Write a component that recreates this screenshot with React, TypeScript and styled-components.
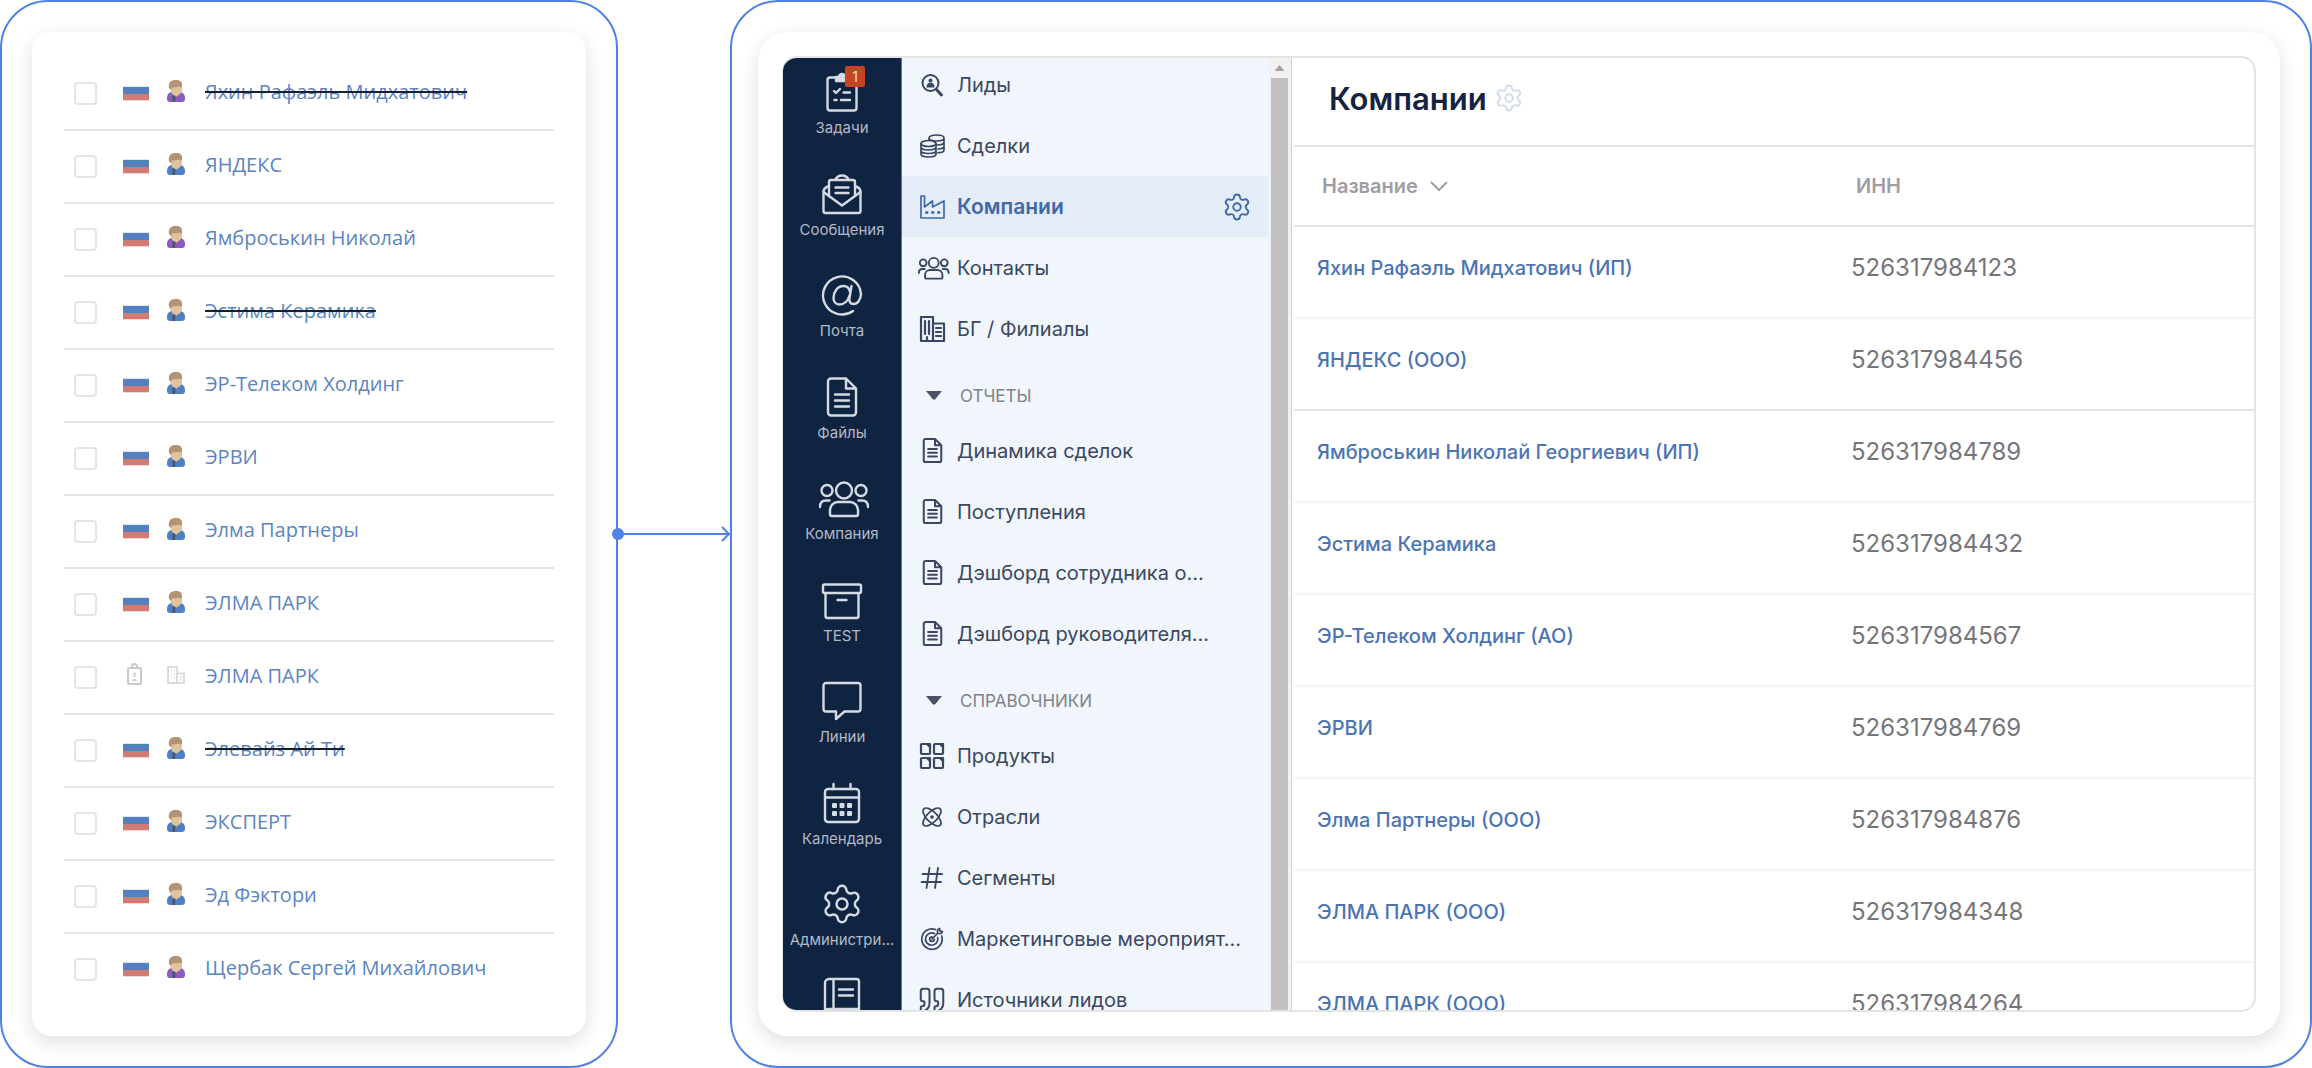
import React from "react";
import styled, { createGlobalStyle, css } from "styled-components";
import { Atom, Quote, Settings } from "lucide-react";

const color = {
  outline: "#4f82e4",
  line: "#e4e4e4",
  lineSoft: "#f3f3f3",
  navy: "#0f2441",
  menu: "#f0f6fb",
  menuActive: "#e4edf7",
  ink: "#3a4762",
  link: "#4c74b3",
};

const GlobalStyle = createGlobalStyle`
  *, *::before, *::after { box-sizing: border-box; }
  body { margin: 0; background: #fff; font-family: Inter, "Noto Sans", sans-serif; }
  ul { list-style: none; margin: 0; padding: 0; }
  a { text-decoration: none; color: inherit; }
  button { font: inherit; color: inherit; background: none; border: 0; padding: 0; cursor: pointer; }
  svg { display: block; flex: none; overflow: visible; }
`;

/* ---------- page ---------- */

const Page = styled.div`
  display: grid;
  grid-template-columns: minmax(0, 618fr) minmax(0, 112fr) minmax(0, 1582fr);
  height: 100vh;
`;

const Panel = styled.section<{ $pad: string }>`
  display: flex;
  flex-direction: column;
  min-height: 0;
  border: 2px solid ${color.outline};
  border-radius: 48px;
  padding: ${(p) => p.$pad};
`;

const Card = styled.div<{ $pad: string; $radius: number }>`
  display: flex;
  flex-direction: column;
  flex: 1;
  min-height: 0;
  padding: ${(p) => p.$pad};
  background: #fff;
  border-radius: ${(p) => p.$radius}px;
  box-shadow: 0 6px 20px rgba(0, 0, 0, 0.13);
`;

const Connector = styled.div`
  position: relative;
  align-self: center;
  height: 2px;
  background: ${color.outline};
  &::before {
    content: "";
    position: absolute;
    left: -6px;
    top: -5px;
    width: 12px;
    height: 12px;
    border-radius: 50%;
    background: ${color.outline};
  }
`;

const ArrowHead = styled.svg`
  position: absolute;
  right: 0;
  top: -7px;
`;

/* ---------- source list ---------- */

const SourceRow = styled.li`
  display: flex;
  align-items: center;
  height: 73px;
  padding-left: 10px;
  border-bottom: 2px solid ${color.line};
  &:last-child { border-bottom-color: transparent; }
`;

const Check = styled.input`
  appearance: none;
  width: 23px;
  height: 23px;
  margin: 0 26px 0 0;
  border: 2px solid #e4e4e4;
  border-radius: 4px;
  background: #fff;
`;

const Marker = styled.span`
  display: flex;
  justify-content: center;
  width: 26px;
  margin-right: 18px;
`;

const Avatar = styled.span`
  display: flex;
  width: 18px;
  margin-right: 20px;
  padding-bottom: 6px;
`;

const Flag = styled.span`
  width: 26px;
  height: 15px;
  background: linear-gradient(#dfe8f2 0 1px, #5580c0 1px 8px, #d27b74 8px 14px, #ecdcd4 14px);
`;

const SourceLink = styled.a<{ $struck?: boolean }>`
  padding-bottom: 4px;
  font-family: "Open Sans", "Noto Sans", sans-serif;
  font-size: 20px;
  line-height: 28px;
  color: #5c84c2;
  ${(p) => p.$struck && css`text-decoration: line-through 2px #16202e;`}
`;

/* ---------- application window ---------- */

const Frame = styled.div`
  display: flex;
  flex: 1;
  min-height: 0;
  overflow: hidden;
  border: 2px solid ${color.line};
  border-left-width: 1px;
  border-radius: 15px;
`;

const Rail = styled.nav`
  display: grid;
  flex: none;
  grid-auto-rows: 1fr;
  width: 119px;
  height: 1015px;
  background: ${color.navy};
  border-right: 1px solid #65758c;
`;

const RailItem = styled.a`
  display: flex;
  flex-direction: column;
  align-items: center;
  gap: 6px;
  padding-top: 14px;
  color: #d6dae2;
`;

const RailIcon = styled.span`
  position: relative;
  display: flex;
  align-items: center;
  justify-content: center;
  width: 40px;
  height: 40px;
`;

const RailLabel = styled.span`
  font-size: 15px;
  line-height: 20px;
  color: #b3b9c5;
`;

const Badge = styled.span`
  position: absolute;
  top: -6px;
  left: 23px;
  width: 20px;
  height: 21px;
  border-radius: 2px;
  background: #c44523;
  color: #f3dcd5;
  font-size: 14px;
  line-height: 21px;
  text-align: center;
`;

const Menu = styled.nav`
  flex: none;
  width: 367px;
  background: ${color.menu};
  color: ${color.ink};
`;

const MenuList = styled.ul`
  &:first-child { margin-top: -4px; }
`;

const MenuRow = styled.li<{ $active?: boolean }>`
  display: flex;
  align-items: center;
  height: 61px;
  margin-right: 1px;
  padding: 0 16px 0 13px;
  font-size: 20px;
  ${(p) => p.$active && css`
    background: ${color.menuActive};
    color: #3f69a8;
    font-size: 21px;
    font-weight: 600;
  `}
`;

const MenuLink = styled.a`
  display: flex;
  flex: 1;
  align-items: center;
  gap: 8px;
  white-space: nowrap;
`;

const MenuIcon = styled.span`
  display: flex;
  justify-content: center;
  width: 34px;
`;

const SectionToggle = styled.button`
  display: flex;
  align-items: center;
  gap: 7px;
  width: 100%;
  height: 61px;
  padding: 12px 13px 0;
  font-size: 17px;
  color: #7f828b;
`;

const SectionCaret = styled.span`
  display: flex;
  justify-content: center;
  width: 38px;
`;

const Scrollbar = styled.div`
  display: flex;
  flex: none;
  flex-direction: column;
  align-items: center;
  width: 22px;
  padding-right: 1px;
  background: #f1f1f1;
`;

const ScrollArrow = styled.span`
  width: 10px;
  height: 6px;
  margin: 7px 0;
  background: #a3a3a3;
  clip-path: polygon(50% 0, 100% 100%, 0 100%);
`;

const Thumb = styled.span`
  flex: 1;
  width: 17px;
  background: #c1c1c1;
`;

const Main = styled.main`
  flex: 1;
  min-width: 0;
  padding-left: 2px;
  border-left: 1px solid #d6d6d6;
`;

const TitleBar = styled.header`
  display: flex;
  align-items: center;
  gap: 7px;
  height: 89px;
  padding: 0 35px 7px;
  border-bottom: 2px solid ${color.line};
  color: #cfdcec;
`;

const Title = styled.h1`
  margin: 0;
  font-size: 31px;
  font-weight: 600;
  color: #132340;
`;

const Table = styled.table`
  width: 100%;
  table-layout: fixed;
  border-spacing: 0;
  text-align: left;
`;

const HeadCell = styled.th<{ $wide?: boolean }>`
  width: ${(p) => (p.$wide ? "534px" : "auto")};
  height: 80px;
  padding: 0 0 0 28px;
  border-bottom: 2px solid ${color.line};
  font-size: 20px;
  font-weight: 600;
  color: #9f9da4;
`;

const SortButton = styled.button`
  display: flex;
  align-items: center;
  gap: 12px;
`;

const Cell = styled.td<{ $strong?: boolean }>`
  height: 92px;
  padding: 0 0 8px 23px;
  border-bottom: 2px solid ${(p) => (p.$strong ? color.line : color.lineSoft)};
  font-size: 24px;
  line-height: 30px;
  color: #77757a;
`;

const CompanyLink = styled.a`
  display: block;
  font-size: 20px;
  font-weight: 500;
  color: ${color.link};
`;

/* ---------- drawings ---------- */

type BoxProps = { w: number; h: number; vb: string; sw?: number; children: React.ReactNode };
const Draw = ({ w, h, vb, sw = 2.4, children }: BoxProps) => (
  <svg width={w} height={h} viewBox={vb} fill="none" stroke="currentColor" strokeWidth={sw}
    strokeLinecap="round" strokeLinejoin="round" aria-hidden="true">{children}</svg>
);

const FileIcon = ({ size, sw }: { size: number; sw?: number }) => (
  <Draw w={size} h={size} vb="0 0 40 40" sw={sw}>
    <path d="M24 1.5H9a3 3 0 0 0-3 3v31a3 3 0 0 0 3 3h22a3 3 0 0 0 3-3V11.5L24 1.5v10h10" />
    <path d="M13 17.5h14M13 23.5h14M13 29.5h14" />
  </Draw>
);

const PeopleIcon = ({ w, h, sw }: { w: number; h: number; sw?: number }) => (
  <Draw w={w} h={h} vb="-2 0 50 40" sw={sw}>
    <circle cx="25" cy="12.5" r="8" />
    <circle cx="8" cy="12.5" r="5.5" />
    <circle cx="42" cy="12.5" r="5.5" />
    <path d="M11 36v-4a8 8 0 0 1 8-8h12a8 8 0 0 1 8 8v4a2 2 0 0 1-2 2H13a2 2 0 0 1-2-2z" />
    <path d="M1 29c0-4 2-6.5 6-6.5h3.5M49 29c0-4-2-6.5-6-6.5h-3.5" />
  </Draw>
);

type RailEntry = { id: string; label?: string; badge?: string; icon: React.ReactNode };
const railItems: RailEntry[] = [
  { id: "tasks", label: "Задачи", badge: "1", icon: (
    <Draw w={40} h={40} vb="0 0 40 40">
      <rect x="5.5" y="5.5" width="29" height="33" rx="2.5" />
      <path d="M14 9V5h3a3 3 0 0 1 6 0h3v4z" fill="currentColor" />
      <path d="M12 19l2 2 4-4M21.5 20.5H28M12.5 28h2M19 28h9" />
    </Draw>) },
  { id: "messages", label: "Сообщения", icon: (
    <Draw w={40} h={40} vb="0 0 40 40">
      <path d="M7 22V8a2 2 0 0 1 2-2h22a2 2 0 0 1 2 2v14M13 6c3-6 11-6 14 0" />
      <path d="M7 12c-3 1-5.5 3-5.5 6v19a2 2 0 0 0 2 2h33a2 2 0 0 0 2-2V18c0-3-2.5-5-5.5-6" />
      <path d="M1.5 18L20 31.5 38.500 18M13.5 13.5h13M13.5 19h13" />
    </Draw>) },
  { id: "mail", label: "Почта", icon: (
    <Draw w={40} h={40} vb="0 0 40 40">
      <path d="M31 36a19 19 0 1 1 8-17c-.3 6-3.5 10-7.5 10-3.500 0-4.500-2.500-4-6l2-12" />
      <path d="M28 17c-.8-4-3-6-6.5-6-6 0-10 6-10 12 0 4 2.5 6.500 6 6.500 5 0 8.500-4 9.800-8.500" />
    </Draw>) },
  { id: "files", label: "Файлы", icon: <FileIcon size={40} /> },
  { id: "company", label: "Компания", icon: <PeopleIcon w={50} h={40} /> },
  { id: "test", label: "TEST", icon: (
    <Draw w={40} h={40} vb="0 0 40 40">
      <rect x="1" y="4.5" width="38" height="8.5" rx="1.5" />
      <path d="M3.5 13v23a2 2 0 0 0 2 2h29a2 2 0 0 0 2-2V13M15.5 20h9" />
    </Draw>) },
  { id: "lines", label: "Линии", icon: (
    <Draw w={40} h={40} vb="0 0 40 40">
      <path d="M4 2h32a2.5 2.5 0 0 1 2.5 2.5V28a2.5 2.5 0 0 1-2.5 2.5H22.5L14 38v-7.500H4A2.5 2.5 0 0 1 1.5 28V4.5A2.5 2.5 0 0 1 4 2z" />
    </Draw>) },
  { id: "calendar", label: "Календарь", icon: (
    <Draw w={40} h={40} vb="0 0 40 40">
      <rect x="3" y="6" width="34" height="33" rx="3" />
      <path d="M3 14.5h34M11.5 1v5M28.5 1v5" />
      <g fill="currentColor" stroke="none">
        {[10, 17.5, 25].map((x) => [20, 28].map((y) => (
          <rect key={`${x}-${y}`} x={x} y={y} width="5" height="5" rx="1" />
        )))}
      </g>
    </Draw>) },
  { id: "admin", label: "Администри...", icon: <Settings size={44} strokeWidth={1.35} /> },
  { id: "book", icon: (
    <Draw w={40} h={40} vb="0 8 40 40">
      <path d="M37 32V3.500A2.500 2.500 0 0 0 34.500 1H7a4 4 0 0 0-4 4v32M11.500 1v30M17 11.500h14M17 17.500h14M3 35c0-3 2-4 4-4h30v8H7" />
    </Draw>) },
];

const LeadIcon = () => (
  <Draw w={24} h={24} vb="0 0 24 24" sw={2}>
    <circle cx="10.5" cy="10" r="8" />
    <path d="M16.5 16.5l5 5.5" strokeWidth="3" />
    <circle cx="10.5" cy="7.5" r="2" fill="currentColor" stroke="none" />
    <path d="M6.500 14.500c0-3.500 1.500-4.800 4-4.800s4 1.300 4 4.800z" fill="currentColor" stroke="none" />
  </Draw>
);

const DealIcon = () => (
  <Draw w={25} h={24} vb="0 0 25 24" sw={1.7}>
    <ellipse cx="8.5" cy="9.5" rx="7.5" ry="3" />
    <path d="M1 9.5v10.500c0 4 15 4 15 0V9.5M1 13c0 4 15 4 15 0M1 16.5c0 4 15 4 15 0" />
    <path d="M9 6.5V4c0-4 15-4 15 0v12c0 1.800-3 2.700-6 2.700M9 4c0 4 15 4 15 0M24 8c0 2-3 3-7 3M24 12c0 2-3 3-6 3" />
  </Draw>
);

const FactoryIcon = () => (
  <Draw w={25} h={24} vb="0 0 25 24" sw={1.7}>
    <path d="M1 23V1h3.5v11l8-6v6l11.5-6v17z" />
    <path d="M6.5 17.5h.5M12.5 17.5h.5M18.5 17.5h.5" strokeWidth="2.6" strokeLinecap="square" />
  </Draw>
);

const OfficeIcon = () => (
  <Draw w={25} h={26} vb="0 0 25 26" sw={2.2}>
    <path d="M1 25V1h12v24zM13 7.5h11V25H1" />
    <path d="M5 5v13M9 5v13M16 12h5M16 16h5M16 20h5M7 21v4" />
  </Draw>
);

const ProductIcon = () => (
  <Draw w={24} h={26} vb="0 0 24 26" sw={2.2}>
    {[[1, 1], [14, 1], [1, 15], [14, 15]].map(([x, y]) => (
      <g key={`${x}-${y}`}>
        <rect x={x} y={y} width="9" height="10" rx="1" />
        <path d={`M${x + 6} ${y}h3v3z`} fill="currentColor" />
      </g>
    ))}
  </Draw>
);

const HashIcon = () => (
  <Draw w={22} h={22} vb="0 0 22 22" sw={1.8}>
    <path d="M1.5 7H21M.5 15H20M8.5 1L5.5 21M17 1l-3 20" />
  </Draw>
);

const TargetIcon = () => (
  <Draw w={22} h={22} vb="0 0 22 22" sw={1.7}>
    <path d="M14.5 1.5A10.200 10.200 0 1 0 20.700 8M13.5 5.500A6.200 6.200 0 1 0 16.700 9.500" />
    <path d="M11 8.800a2.300 2.300 0 1 0 2.300 2.500M11 11l5.500-5.500M16.500 5.500V2l2-1.500.5 2.500 2.500.5L20 5.500z" />
  </Draw>
);

type Entry = { label: string; icon: React.ReactNode; active?: boolean };
const report = (label: string): Entry => ({ label, icon: <FileIcon size={25} sw={3.2} /> });

const mainEntries: Entry[] = [
  { label: "Лиды", icon: <LeadIcon /> },
  { label: "Сделки", icon: <DealIcon /> },
  { label: "Компании", icon: <FactoryIcon />, active: true },
  { label: "Контакты", icon: <PeopleIcon w={31} h={25} sw={3} /> },
  { label: "БГ / Филиалы", icon: <OfficeIcon /> },
];

const sections: { title: string; entries: Entry[] }[] = [
  { title: "ОТЧЕТЫ", entries: [
    report("Динамика сделок"),
    report("Поступления"),
    report("Дэшборд сотрудника о..."),
    report("Дэшборд руководителя..."),
  ] },
  { title: "СПРАВОЧНИКИ", entries: [
    { label: "Продукты", icon: <ProductIcon /> },
    { label: "Отрасли", icon: <Atom size={24} strokeWidth={1.7} /> },
    { label: "Сегменты", icon: <HashIcon /> },
    { label: "Маркетинговые мероприят...", icon: <TargetIcon /> },
    { label: "Источники лидов", icon: <Quote size={30} strokeWidth={1.6} /> },
  ] },
];

const companies: [string, string][] = [
  ["Яхин Рафаэль Мидхатович (ИП)", "526317984123"],
  ["ЯНДЕКС (ООО)", "526317984456"],
  ["Ямброськин Николай Георгиевич (ИП)", "526317984789"],
  ["Эстима Керамика", "526317984432"],
  ["ЭР-Телеком Холдинг (АО)", "526317984567"],
  ["ЭРВИ", "526317984769"],
  ["Элма Партнеры (ООО)", "526317984876"],
  ["ЭЛМА ПАРК (ООО)", "526317984348"],
  ["ЭЛМА ПАРК (ООО)", "526317984264"],
];

type Source = { name: string; kind: "person" | "firm" | "none"; struck?: boolean };
const sources: Source[] = [
  { name: "Яхин Рафаэль Мидхатович", kind: "person", struck: true },
  { name: "ЯНДЕКС", kind: "firm" },
  { name: "Ямброськин Николай", kind: "person" },
  { name: "Эстима Керамика", kind: "firm", struck: true },
  { name: "ЭР-Телеком Холдинг", kind: "firm" },
  { name: "ЭРВИ", kind: "firm" },
  { name: "Элма Партнеры", kind: "firm" },
  { name: "ЭЛМА ПАРК", kind: "firm" },
  { name: "ЭЛМА ПАРК", kind: "none" },
  { name: "Элевайз Ай Ти", kind: "firm", struck: true },
  { name: "ЭКСПЕРТ", kind: "firm" },
  { name: "Эд Фэктори", kind: "firm" },
  { name: "Щербак Сергей Михайлович", kind: "person" },
];

const PersonIcon = ({ suit }: { suit: string }) => (
  <svg width="18" height="22" viewBox="0 0 18 22" aria-hidden="true">
    <path d="M0 19c0-4 1-6.500 5-7h8c4 .5 5 3 5 7 0 2-1 3-3 3H3c-2 0-3-1-3-3z" fill={suit} />
    <path d="M5 9h8v5l-4 3-4-3z" fill="#d9bd94" />
    <path d="M3 3h12v7c0 3-3 5-6 5s-5-2-5.500-5z" fill="#dec49c" />
    <path d="M2 8C1 2.500 4 0 9 0s6.500 2.500 6 7c-1 .5-2 .5-3-.5C9.500 8 6 6.500 5 7.500L4 10z" fill="#b39374" />
    <path d="M5.500 15l3 1-.5 6H5.500z" fill="#4a5568" />
  </svg>
);

const CardMarker = () => (
  <svg width="18" height="26" viewBox="1 0 18 26" fill="none" stroke="#c9cacd" strokeWidth="2" aria-hidden="true">
    <rect x="2" y="3" width="13" height="16" rx="1" />
    <path d="M6 3V1.500a2.500 2.500 0 0 1 5 0V3M8.500 7.500v4.500M6.500 15h4" />
  </svg>
);

const FirmMarker = () => (
  <svg width="18" height="18" viewBox="0 0 18 18" fill="none" stroke="#d0d1d4" strokeWidth="1.500" aria-hidden="true">
    <path d="M1 17V1h9v16zM10 7.500h7V17h-7M4 4.500h1M7 4.500h1M4 8h1M7 8h1M4 11.500h1M7 11.500h1M13 11h1.500M13 14h1.500" />
  </svg>
);

const MenuEntries = ({ entries }: { entries: Entry[] }) => (
  <MenuList>
    {entries.map((e) => (
      <MenuRow key={e.label} $active={e.active}>
        <MenuLink href="#">
          <MenuIcon>{e.icon}</MenuIcon>
          {e.label}
        </MenuLink>
        {e.active && (
          <button type="button" aria-label="Настройки раздела">
            <Settings size={30} strokeWidth={1.5} />
          </button>
        )}
      </MenuRow>
    ))}
  </MenuList>
);

export default function App() {
  return (
    <>
      <GlobalStyle />
      <Page>
        <Panel $pad="30px">
          <Card $pad="26px 32px 0" $radius={20}>
            <ul>
              {sources.map((s, i) => (
                <SourceRow key={i}>
                  <Check type="checkbox" aria-label={s.name} />
                  <Marker>{s.kind === "none" ? <CardMarker /> : <Flag />}</Marker>
                  <Avatar>
                    {s.kind === "none" ? <FirmMarker /> : <PersonIcon suit={s.kind === "person" ? "#8a5cc0" : "#4f80c6"} />}
                  </Avatar>
                  <SourceLink href="#" $struck={s.struck}>{s.name}</SourceLink>
                </SourceRow>
              ))}
            </ul>
          </Card>
        </Panel>

        <Connector>
          <ArrowHead width="9" height="16" viewBox="0 0 9 16" fill="none" stroke={color.outline} strokeWidth="2">
            <path d="M1 1l7 7-7 7" />
          </ArrowHead>
        </Connector>

        <Panel $pad="30px 30px 30px 26px">
          <Card $pad="24px" $radius={30}>
            <Frame>
              <Rail>
                {railItems.map((item) => (
                  <RailItem key={item.id} href="#">
                    <RailIcon>
                      {item.icon}
                      {item.badge && <Badge>{item.badge}</Badge>}
                    </RailIcon>
                    {item.label && <RailLabel>{item.label}</RailLabel>}
                  </RailItem>
                ))}
              </Rail>

              <Menu>
                <MenuEntries entries={mainEntries} />
                {sections.map((s) => (
                  <React.Fragment key={s.title}>
                    <SectionToggle type="button">
                      <SectionCaret>
                        <svg width="16" height="9" viewBox="0 0 16 9" fill="#4a5366" aria-hidden="true">
                          <path d="M0 0h16L9 8.500H7z" />
                        </svg>
                      </SectionCaret>
                      {s.title}
                    </SectionToggle>
                    <MenuEntries entries={s.entries} />
                  </React.Fragment>
                ))}
              </Menu>

              <Scrollbar>
                <ScrollArrow />
                <Thumb />
              </Scrollbar>

              <Main>
                <TitleBar>
                  <Title>Компании</Title>
                  <button type="button" aria-label="Настройки">
                    <Settings size={30} strokeWidth={1.5} />
                  </button>
                </TitleBar>
                <Table>
                  <thead>
                    <tr>
                      <HeadCell $wide>
                        <SortButton type="button">
                          Название
                          <svg width="18" height="10" viewBox="0 0 18 10" fill="none" stroke="currentColor" strokeWidth="2" aria-hidden="true">
                            <path d="M1 1l8 8 8-8" />
                          </svg>
                        </SortButton>
                      </HeadCell>
                      <HeadCell>ИНН</HeadCell>
                    </tr>
                  </thead>
                  <tbody>
                    {companies.map(([name, inn], i) => (
                      <tr key={inn}>
                        <Cell $strong={i === 1}><CompanyLink href="#">{name}</CompanyLink></Cell>
                        <Cell $strong={i === 1}>{inn}</Cell>
                      </tr>
                    ))}
                  </tbody>
                </Table>
              </Main>
            </Frame>
          </Card>
        </Panel>
      </Page>
    </>
  );
}
